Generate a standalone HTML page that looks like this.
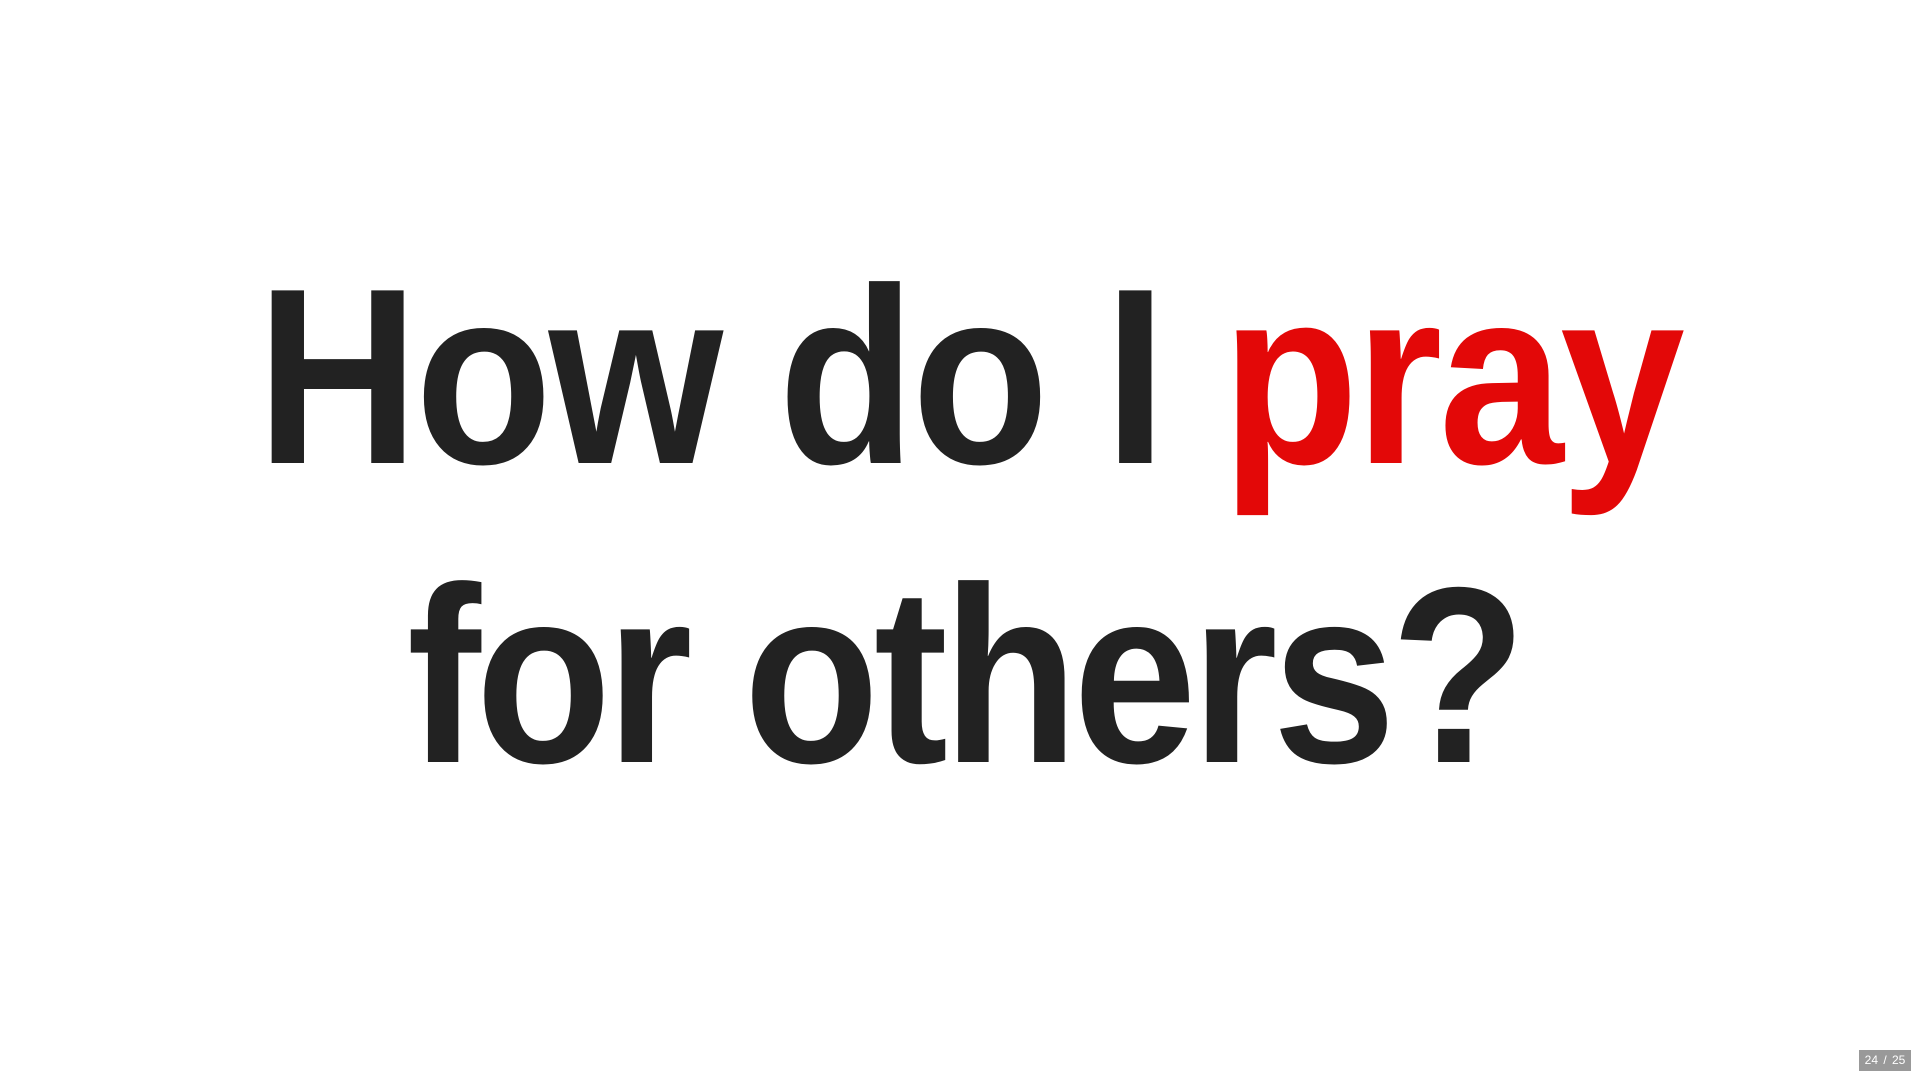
<!DOCTYPE html>
<html><head><meta charset="utf-8"><style>
html,body{margin:0;padding:0;background:#fff;width:1920px;height:1080px;overflow:hidden}
.l{position:absolute;left:0;width:1920px;text-align:center;font-family:"Liberation Sans",sans-serif;font-weight:bold;font-size:251px;line-height:251px;color:#222;letter-spacing:-4px;white-space:nowrap;transform:scaleX(0.885);transform-origin:960px 0}
.r{color:#e30808}
.pg{position:absolute;left:1859px;top:1050px;width:52px;height:21px;background:#999;color:#fff;font-family:"Liberation Sans",sans-serif;font-size:12px;line-height:21px;text-align:center;word-spacing:2px}
</style></head><body>
<div class="l" style="top:252px;left:9px;transform:scaleX(0.894)">How do I <span class="r">pray</span></div>
<div class="l" style="top:551px;left:4px;letter-spacing:-6px">for others?</div>
<div class="pg">24 / 25</div>
</body></html>
